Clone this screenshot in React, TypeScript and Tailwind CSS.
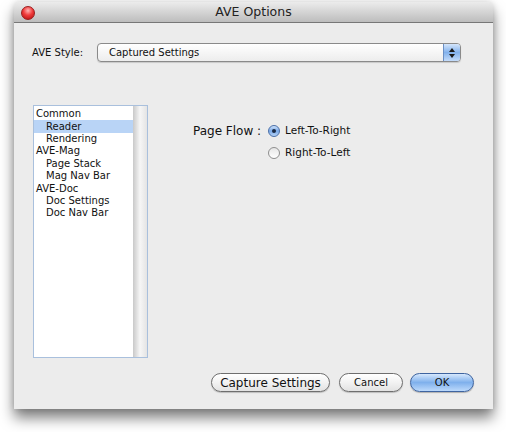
import React from "react";

const F = { fontFamily: '"DejaVu Sans", "Liberation Sans", sans-serif' };

function Radio({ checked }: { checked?: boolean }) {
  return (
    <span
      className={
        "relative inline-flex h-[12px] w-[12px] items-center justify-center rounded-full border " +
        (checked
          ? "border-[#4a6fa8] bg-gradient-to-b from-[#cfe2fb] via-[#78a8e6] to-[#b6d3f7]"
          : "border-[#8e8e8e] bg-gradient-to-b from-[#e6e6e6] to-[#ffffff]")
      }
    >
      {checked && <span className="h-[4px] w-[4px] rounded-full bg-[#1b2a44]" />}
    </span>
  );
}

const items: { label: string; indent?: boolean; selected?: boolean }[] = [
  { label: "Common" },
  { label: "Reader", indent: true, selected: true },
  { label: "Rendering", indent: true },
  { label: "AVE-Mag" },
  { label: "Page Stack", indent: true },
  { label: "Mag Nav Bar", indent: true },
  { label: "AVE-Doc" },
  { label: "Doc Settings", indent: true },
  { label: "Doc Nav Bar", indent: true },
];

export default function App() {
  return (
    <div className="h-[432px] w-[506px] overflow-hidden bg-white pl-[14px] pt-[2px]" style={F}>
      <div className="flex h-[407px] w-[479px] flex-col rounded-t-[5px] bg-[#ececec] shadow-[0_9px_14px_rgba(0,0,0,0.5),0_0_6px_rgba(0,0,0,0.15)]">
        {/* Title bar */}
        <div className="relative flex h-[21px] items-center justify-center rounded-t-[5px] border-b border-[#777] bg-gradient-to-b from-[#ececec] to-[#bdbdbd]">
          <span className="absolute left-[7px] top-[4px] h-[14px] w-[14px] rounded-full border border-[#9c1c1c] bg-[radial-gradient(circle_at_50%_30%,#ffb4b4_0%,#f03c3c_45%,#b00c0c_100%)]" />
          <span className="text-[12.5px] text-[#222]">AVE Options</span>
        </div>

        {/* Body */}
        <div className="flex flex-1 flex-col">
          <div className="mt-[20px] flex h-[19px] items-center pl-[18px]">
            <span className="w-[65px] text-[10px] text-[#111]">AVE Style:</span>
            <div className="flex h-[19px] w-[364px] items-stretch overflow-hidden rounded-[4px] border border-[#8a8a8a] bg-gradient-to-b from-[#ffffff] to-[#ededed] shadow-[0_1px_1px_rgba(0,0,0,0.15)]">
              <span className="flex flex-1 items-center pl-[11px] text-[10px] text-[#111]">Captured Settings</span>
              <span className="flex w-[17px] flex-col items-center justify-center gap-[2px] border-l border-[#6b8fc4] bg-gradient-to-b from-[#d5e6fb] via-[#82b1ec] to-[#c4dcfa]">
                <svg width="6" height="4" viewBox="0 0 6 4"><path d="M3 0L6 4H0Z" fill="#1a1a1a" /></svg>
                <svg width="6" height="4" viewBox="0 0 6 4"><path d="M0 0H6L3 4Z" fill="#1a1a1a" /></svg>
              </span>
            </div>
          </div>

          <div className="mt-[43px] flex h-[253px]">
            <div className="ml-[19px] flex h-[253px] w-[115px] border border-[#a9c0dd] bg-white">
              <div className="flex-1 pt-[2px]">
                {items.map((it) => (
                  <div
                    key={it.label}
                    className={
                      "flex h-[12.4px] items-center text-[10px] leading-none text-[#111] " +
                      (it.indent ? "pl-[12px] " : "pl-[2px] ") +
                      (it.selected ? "bg-[#b9d4f6]" : "")
                    }
                  >
                    {it.label}
                  </div>
                ))}
              </div>
              <div className="w-[14px] bg-gradient-to-r from-[#c9c9c9] via-[#f6f6f6] to-[#e4e4e4]" />
            </div>

            <div className="ml-[45px] pt-[17px]">
              <div className="flex items-center">
                <span className="w-[75px] text-[12px] text-[#111]">Page Flow :</span>
                <Radio checked />
                <span className="ml-[5px] text-[10.5px] text-[#111]">Left-To-Right</span>
              </div>
              <div className="mt-[5px] flex items-center pl-[75px]">
                <Radio />
                <span className="ml-[5px] text-[10.5px] text-[#111]">Right-To-Left</span>
              </div>
            </div>
          </div>

          <div className="mt-[15px] flex justify-end pr-[19px]">
            <button className="flex h-[19px] w-[119px] items-center justify-center rounded-full border border-[#6e6e6e] bg-gradient-to-b from-[#ffffff] via-[#f2f2f2] to-[#e2e2e2] text-[12px] text-[#111] shadow-[0_1px_1px_rgba(0,0,0,0.2)]">
              Capture Settings
            </button>
            <button className="ml-[9px] flex h-[19px] w-[64px] items-center justify-center rounded-full border border-[#6e6e6e] bg-gradient-to-b from-[#ffffff] via-[#f2f2f2] to-[#e2e2e2] text-[10px] text-[#111] shadow-[0_1px_1px_rgba(0,0,0,0.2)]">
              Cancel
            </button>
            <button className="ml-[7px] flex h-[19px] w-[64px] items-center justify-center rounded-full border border-[#3e64a0] bg-gradient-to-b from-[#d6e8fd] via-[#7fb0ec] to-[#bcd9fb] text-[10px] text-[#111] shadow-[0_1px_1px_rgba(0,0,0,0.25)]">
              OK
            </button>
          </div>
        </div>
      </div>
    </div>
  );
}
